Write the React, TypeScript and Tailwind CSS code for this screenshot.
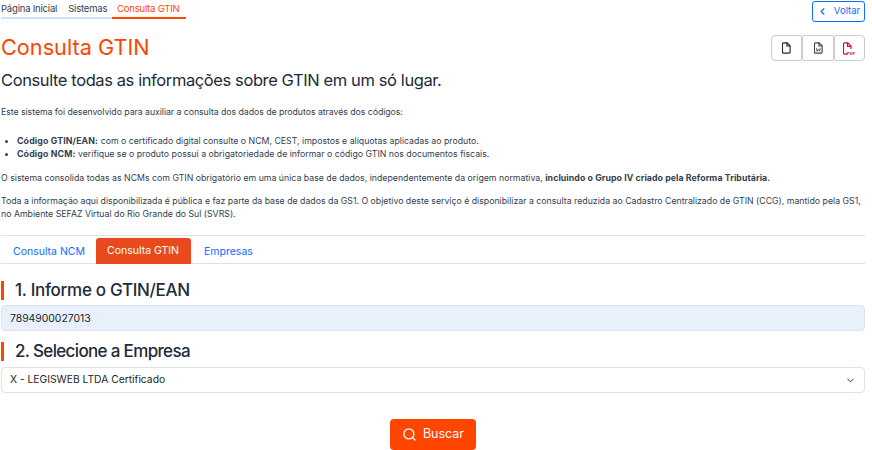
import React from 'react';
import { ChevronLeft, ChevronDown, Search } from 'lucide-react';

const FileIcon = ({ label }: { label?: boolean }) => (
  <svg width="9" height="12" viewBox="0 0 10 13" fill="none" stroke={label ? '#3a4654' : '#212529'} strokeWidth="1.3">
    <path d="M1.5.8h4.2L9 4.1v7a1 1 0 0 1-1 1H1.5a1 1 0 0 1-1-1V1.8a1 1 0 0 1 1-1z" />
    <path d="M5.5.8v3.5H9" />
    {label && <path d="M2.6 6.6l.8 3.6 1.4-2.6 1.4 2.6.8-3.6" strokeWidth=".9" />}
  </svg>
);

const PdfIcon = () => (
  <svg width="13" height="13" viewBox="0 0 13 13" fill="none" stroke="#c8102e" strokeWidth="1.2">
    <path d="M4.5 12.2h-3a1 1 0 0 1-1-1V1.8a1 1 0 0 1 1-1h3.2L8 4.1v3" />
    <path d="M4.5.8v3.5H8" />
    <text x="3.5" y="12.6" fontSize="4.4" fontWeight="700" fill="#c8102e" stroke="none" fontFamily="Liberation Sans, sans-serif">PDF</text>
  </svg>
);

const SectionTitle = ({ children, className }: { children: React.ReactNode; className: string }) => (
  <h2 className={`flex items-center h-[19px] border-l-[3px] border-[#ff4500] pl-[11px] text-[17px] font-medium text-[#1d2b3a] leading-none ${className}`}>
    {children}
  </h2>
);

export default function App() {
  return (
    <div className="w-[872px] h-[450px] overflow-hidden bg-white font-['Inter',sans-serif] text-[#212529]">
      <div className="w-[864px] ml-px">
        <div className="flex justify-between items-start">
          <nav className="flex text-[9.5px] tracking-[-0.2px] mt-[2px] h-[17px] whitespace-nowrap">
            <div className="flex gap-[11px] border-b-2 border-[#cfe2f5] w-[111px]">
              <span className="text-[#33404d]">Página Inicial</span>
              <span className="text-[#33404d]">Sistemas</span>
            </div>
            <span className="border-b-2 border-[#ff4500] px-[5px] w-[74px] text-[#ff4500]">Consulta GTIN</span>
          </nav>
          <button className="mt-px flex items-center gap-[6px] w-[53px] h-[21px] justify-center border border-[#0d6efd] rounded-[3px] text-[9.5px] text-[#0d6efd]">
            <ChevronLeft size={11} strokeWidth={2.5} />
            Voltar
          </button>
        </div>

        <div className="flex justify-between items-start mt-[13px]">
          <h1 className="text-[21.7px] leading-[24px] text-[#ff4500]">Consulta GTIN</h1>
          <div className="flex">
            <button className="flex items-center justify-center w-[31px] h-[26px] border border-[#ccc] rounded-l-[4px] rounded-r-[2px]"><FileIcon /></button>
            <button className="flex items-center justify-center w-[32px] h-[26px] border border-[#ccc] rounded-[2px]"><FileIcon label /></button>
            <button className="flex items-center justify-center w-[31px] h-[26px] border border-[#ccc] rounded-r-[4px] rounded-l-[2px]"><PdfIcon /></button>
          </div>
        </div>

        <p className="text-[16.5px] tracking-[-0.4px] leading-[22px] mt-[8px] text-[#1d2b3a]">Consulte todas as informações sobre GTIN em um só lugar.</p>

        <div className="text-[8.75px] leading-[13px] text-[#33404d]">
          <p className="mt-[15px] tracking-[-0.05px]">Este sistema foi desenvolvido para auxiliar a consulta dos dados de produtos através dos códigos:</p>
          <ul className="list-disc pl-[16px] mt-[16px]">
            <li><strong className="font-bold tracking-[0.15px]">Código GTIN/EAN:</strong> com o certificado digital consulte o NCM, CEST, impostos e alíquotas aplicadas ao produto.</li>
            <li><strong className="font-bold tracking-[0.15px]">Código NCM:</strong> verifique se o produto possui a obrigatoriedade de informar o código GTIN nos documentos fiscais.</li>
          </ul>
          <p className="mt-[11px]">O sistema consolida todas as NCMs com GTIN obrigatório em uma única base de dados, independentemente da origem normativa, <strong className="font-bold tracking-[0.08px]">incluindo o Grupo IV criado pela Reforma Tributária.</strong></p>
          <p className="mt-[10px]">Toda a informação aqui disponibilizada é pública e faz parte da base de dados da GS1. O objetivo deste serviço é disponibilizar a consulta reduzida ao Cadastro Centralizado de GTIN (CCG), mantido pela GS1,<br />no Ambiente SEFAZ Virtual do Rio Grande do Sul (SVRS).</p>
        </div>

        <div className="flex items-end h-[29px] mt-[14px] border-y border-[#dee2e6] text-[10.5px] text-[#0d6efd]">
          <span className="h-[23px] leading-[23px] pl-[12px] pr-[11px]">Consulta NCM</span>
          <span className="h-[26px] leading-[26px] pl-[11px] pr-[12px] bg-[#e8491d] text-white rounded-t-[3px] -mb-px">Consulta GTIN</span>
          <span className="h-[23px] leading-[23px] pl-[13px] pr-[12px]">Empresas</span>
        </div>

        <div className="mt-[17px]"><SectionTitle className="tracking-[-0.3px]">1. Informe o GTIN/EAN</SectionTitle></div>
        <input
          readOnly
          value="7894900027013"
          className="block w-full h-[26px] mt-[5px] px-[8px] text-[10.4px] bg-[#e8f0fe] border border-[#dee2e6] rounded-[4px] outline-none text-[#212529]"
        />

        <div className="mt-[11px]"><SectionTitle className="tracking-[-0.66px]">2. Selecione a Empresa</SectionTitle></div>
        <div className="flex items-center justify-between w-full h-[26px] mt-[6px] px-[8px] text-[10.3px] border border-[#dee2e6] rounded-[4px]">
          <span>X - LEGISWEB LTDA Certificado</span>
          <ChevronDown size={11} />
        </div>

        <div className="flex justify-center mt-[26px]">
          <button className="flex items-center justify-center gap-[6px] w-[86px] h-[31px] bg-[#ff4500] text-white text-[12.5px] rounded-[4px]">
            <Search size={15} strokeWidth={2.2} />
            Buscar
          </button>
        </div>
      </div>
    </div>
  );
}
